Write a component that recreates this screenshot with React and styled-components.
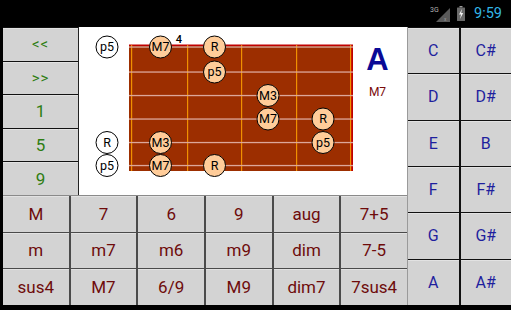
import styled, { createGlobalStyle } from "styled-components";

const GlobalStyle = createGlobalStyle`
  html, body {
    margin: 0;
    padding: 0;
    background: #000;
  }
  body {
    font-family: Roboto, "Liberation Sans", Arial, sans-serif;
  }
`;

const Screen = styled.div`
  width: 511px;
  height: 310px;
  background: #000;
  display: flex;
  flex-direction: column;
  overflow: hidden;
`;

const StatusBar = styled.div`
  height: 27px;
  display: flex;
  align-items: center;
  justify-content: flex-end;
  gap: 5px;
  padding-right: 9px;
  box-sizing: border-box;
`;

const Clock = styled.span`
  color: #33b5e5;
  font-size: 14.5px;
  margin-left: 4px;
`;

const Body = styled.div`
  display: grid;
  grid-template-columns: 404px 104px;
  padding-left: 3px;
  height: 278px;
`;

const LeftPanel = styled.div`
  display: grid;
  grid-template-rows: 168px 110px;
`;

const TopArea = styled.div`
  display: grid;
  grid-template-columns: 76px 1fr;
`;

const SideColumn = styled.div`
  display: grid;
  grid-template-rows: repeat(5, 1fr);
  gap: 1px;
  padding-top: 1px;
  background: #111;
  border-right: 1px solid #222;
`;

const Button = styled.div`
  display: flex;
  align-items: center;
  justify-content: center;
  background: #d3d3d3;
  color: ${(p) => p.$color};
  font-size: ${(p) => p.$size || 17}px;
  letter-spacing: ${(p) => p.$spacing || 0}px;
  box-shadow: inset 0 1px 0 #e2e2e2;
`;

const Display = styled.div`
  background: #fff;
  display: flex;
  align-items: flex-start;
`;

const ChordLabel = styled.div`
  width: 45px;
  display: flex;
  flex-direction: column;
  align-items: center;
  padding-top: 17px;
`;

const ChordRoot = styled.div`
  color: #0a0a96;
  font-size: 31px;
  font-weight: bold;
  font-family: "Liberation Sans", Arial, sans-serif;
  line-height: 1;
`;

const ChordType = styled.div`
  color: #7a0a0a;
  font-size: 12px;
  margin-top: 10px;
`;

const ChordGrid = styled.div`
  display: grid;
  grid-template-columns: repeat(6, 1fr);
  grid-template-rows: repeat(3, 1fr);
  gap: 1px 2px;
  background: #4a4a4a;
  border-top: 1px solid #8a8a8a;
`;

const NoteGrid = styled.div`
  display: grid;
  grid-template-columns: 1fr 1fr;
  grid-template-rows: repeat(6, 1fr);
  gap: 1px 2px;
  padding-top: 1px;
  background: #111;
  border-left: 1px solid #9a9a9a;
`;

const notes = [
  ["C", "C#"],
  ["D", "D#"],
  ["E", "B"],
  ["F", "F#"],
  ["G", "G#"],
  ["A", "A#"],
];

const chords = [
  "M", "7", "6", "9", "aug", "7+5",
  "m", "m7", "m6", "m9", "dim", "7-5",
  "sus4", "M7", "6/9", "M9", "dim7", "7sus4",
];

const sideButtons = [
  { label: "<<", size: 15, spacing: 1 },
  { label: ">>", size: 15, spacing: 1 },
  { label: "1" },
  { label: "5" },
  { label: "9" },
];

const strings = [20, 45, 68.5, 92, 115.5, 138.5];
const frets = [52, 108, 162, 217, 271];
const posX = [28, 81.5, 135.5, 189, 244];

// [string, position, interval]; position 0 = open string
const dots = [
  [0, 0, "p5"], [0, 1, "M7"], [0, 2, "R"],
  [1, 2, "p5"],
  [2, 3, "M3"],
  [3, 3, "M7"], [3, 4, "R"],
  [4, 0, "R"], [4, 1, "M3"], [4, 4, "p5"],
  [5, 0, "p5"], [5, 1, "M7"], [5, 2, "R"],
];

const Fretboard = () => (
  <svg width="276" height="168" viewBox="0 0 276 168">
    <rect x="50" y="18" width="224" height="126" fill="#9c2e00" />
    <rect x="50" y="17.5" width="224" height="1.5" fill="#c00000" />
    <rect x="272" y="18" width="2" height="126" fill="#c00000" />
    {frets.map((x) => (
      <rect key={x} x={x} y="18" width="1.2" height="126" fill="#f09000" />
    ))}
    {strings.map((y) => (
      <rect key={y} x="50" y={y - 0.6} width="224" height="1.3" fill="#dca79a" />
    ))}
    <text x="100" y="15.5" fontSize="11" fontWeight="500" fontFamily="Roboto, sans-serif" textAnchor="middle" fill="#000">
      4
    </text>
    {dots.map(([s, f, label]) => (
      <g key={`${s}-${f}`}>
        <circle
          cx={posX[f]}
          cy={strings[s]}
          r="11"
          fill={f === 0 ? "#fff" : "#ffcc99"}
          stroke="#000"
          strokeWidth="1"
        />
        <text
          x={posX[f]}
          y={strings[s] + 4.4}
          fontSize="12.5"
          fontFamily="Roboto, sans-serif"
          textAnchor="middle"
          fill="#000"
        >
          {label}
        </text>
      </g>
    ))}
  </svg>
);

const SignalIcon = () => (
  <svg width="22" height="18" viewBox="0 0 22 18">
    <text x="0" y="7" fontSize="7" fontFamily="Roboto, sans-serif" fill="#b0b0b0">
      3G
    </text>
    <polygon points="20,3 20,17 6,17" fill="#5a5a5a" />
    <text x="14" y="16" fontSize="5" fontFamily="Roboto, sans-serif" fill="#999">
      x
    </text>
  </svg>
);

const BatteryIcon = () => (
  <svg width="8" height="15" viewBox="0 0 8 15">
    <rect x="2.5" y="0" width="3" height="1.5" fill="#9a9a9a" />
    <rect x="0" y="1.5" width="8" height="13.5" rx="0.5" fill="#6a6a6a" />
    <polygon points="5,3 2,8.5 4,8.5 3,13 6.2,7 4.2,7" fill="#f2f2f2" />
  </svg>
);

const App = () => {
  return (
    <Screen>
      <GlobalStyle />
      <StatusBar>
        <SignalIcon />
        <BatteryIcon />
        <Clock>9:59</Clock>
      </StatusBar>
      <Body>
        <LeftPanel>
          <TopArea>
            <SideColumn>
              {sideButtons.map((b) => (
                <Button key={b.label} $color="#2e7d12" $size={b.size || 17} $spacing={b.spacing}>
                  {b.label}
                </Button>
              ))}
            </SideColumn>
            <Display>
              <Fretboard />
              <ChordLabel>
                <ChordRoot>A</ChordRoot>
                <ChordType>M7</ChordType>
              </ChordLabel>
            </Display>
          </TopArea>
          <ChordGrid>
            {chords.map((c) => (
              <Button key={c} $color="#6e0b0b" $size={17}>
                {c}
              </Button>
            ))}
          </ChordGrid>
        </LeftPanel>
        <NoteGrid>
          {notes.flat().map((n) => (
            <Button key={n} $color="#1f1f9e" $size={16}>
              {n}
            </Button>
          ))}
        </NoteGrid>
      </Body>
    </Screen>
  );
};

export default App;
